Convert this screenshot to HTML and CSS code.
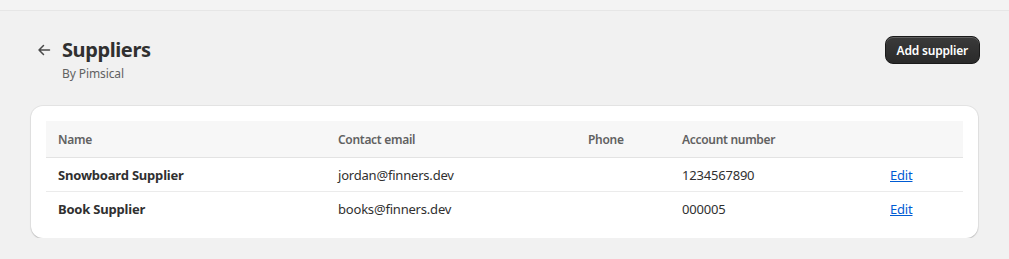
FILE: index.html
```html
<!DOCTYPE html>
<html>
<head>
<meta charset="utf-8">
<link rel="stylesheet" href="styles.css">
</head>
<body>
<div class="topbar"></div>
<main class="page">
  <header class="page-header">
    <div class="title-group">
      <button class="back" aria-label="Back">
        <svg width="16" height="16" viewBox="0 0 16 16" fill="none" stroke="#4a4a4a" stroke-width="1.5" stroke-linecap="round" stroke-linejoin="round"><path d="M13.5 8H3M7.5 3.5 3 8l4.5 4.5"/></svg>
      </button>
      <div>
        <h1 class="title">Suppliers</h1>
        <div class="subtitle">By Pimsical</div>
      </div>
    </div>
    <button class="primary">Add supplier</button>
  </header>
  <section class="card">
    <table class="table">
      <thead>
        <tr>
          <th class="c-name">Name</th>
          <th class="c-email">Contact email</th>
          <th class="c-phone">Phone</th>
          <th class="c-acct">Account number</th>
          <th class="c-edit"></th>
        </tr>
      </thead>
      <tbody>
        <tr>
          <td class="strong">Snowboard Supplier</td>
          <td>jordan@finners.dev</td>
          <td></td>
          <td>1234567890</td>
          <td><a href="#" class="link">Edit</a></td>
        </tr>
        <tr>
          <td class="strong">Book Supplier</td>
          <td>books@finners.dev</td>
          <td></td>
          <td>000005</td>
          <td><a href="#" class="link">Edit</a></td>
        </tr>
      </tbody>
    </table>
  </section>
</main>
</body>
</html>
```
FILE: styles.css
```css
html, body {
  margin: 0;
  background: #f1f1f1;
  font-family: "Noto Sans", "Open Sans", sans-serif;
  color: #303030;
}
.topbar {
  height: 10px;
  background: #f3f3f3;
  border-bottom: 1px solid #e6e6e6;
}
.page {
  padding: 25px 29px 0 31px;
}
.page-header {
  display: flex;
  justify-content: space-between;
  align-items: flex-start;
}
.title-group {
  display: flex;
  align-items: flex-start;
  gap: 8px;
  padding-left: 4px;
}
.back {
  border: 0;
  background: none;
  padding: 0;
  margin-top: 5px;
  width: 18px;
  height: 18px;
  display: flex;
  align-items: center;
  justify-content: center;
}
.title {
  margin: 0 0 0 1px;
  font-size: 20px;
  font-weight: 700;
  line-height: 28px;
  letter-spacing: -0.4px;
}
.subtitle {
  font-size: 12px;
  color: #616161;
  line-height: 18px;
  margin-top: 1px;
  margin-left: 1px;
  letter-spacing: -0.1px;
}
.primary {
  height: 28px;
  padding: 0 11px;
  border-radius: 8px;
  border: 1px solid #1a1a1a;
  background: linear-gradient(#3a3a3a, #2a2a2a);
  color: #fff;
  font-family: inherit;
  font-size: 12px;
  font-weight: 600;
  letter-spacing: -0.2px;
  box-shadow: inset 0 1px 0 rgba(255,255,255,0.2);
}
.card {
  margin-top: 23px;
  margin-right: 2px;
  background: #fff;
  border-radius: 12px;
  box-shadow: 0 1px 0 rgba(0,0,0,0.07), 0 0 0 1px rgba(0,0,0,0.05), 0 1px 2px rgba(0,0,0,0.1);
  padding: 15px 15px 13px 15px;
}
.table {
  width: 100%;
  border-collapse: collapse;
  font-size: 13px;
}
.table th {
  text-align: left;
  background: #f7f7f7;
  font-size: 12px;
  font-weight: 600;
  color: #616161;
  height: 36px;
  padding: 0 12px;
  border-bottom: 1px solid #e3e3e3;
  letter-spacing: -0.3px;
}
.table td {
  height: 33px;
  padding: 0 12px;
  border-bottom: 1px solid #ebebeb;
  letter-spacing: -0.2px;
}
.table tbody tr:last-child td { border-bottom: 0; }
.c-name { width: 256px; }
.c-email { width: 226px; }
.c-phone { width: 70px; }
.c-acct { width: 184px; }
.strong { font-weight: 700; }
.link {
  color: #005bd3;
  text-decoration: underline;
}
```
